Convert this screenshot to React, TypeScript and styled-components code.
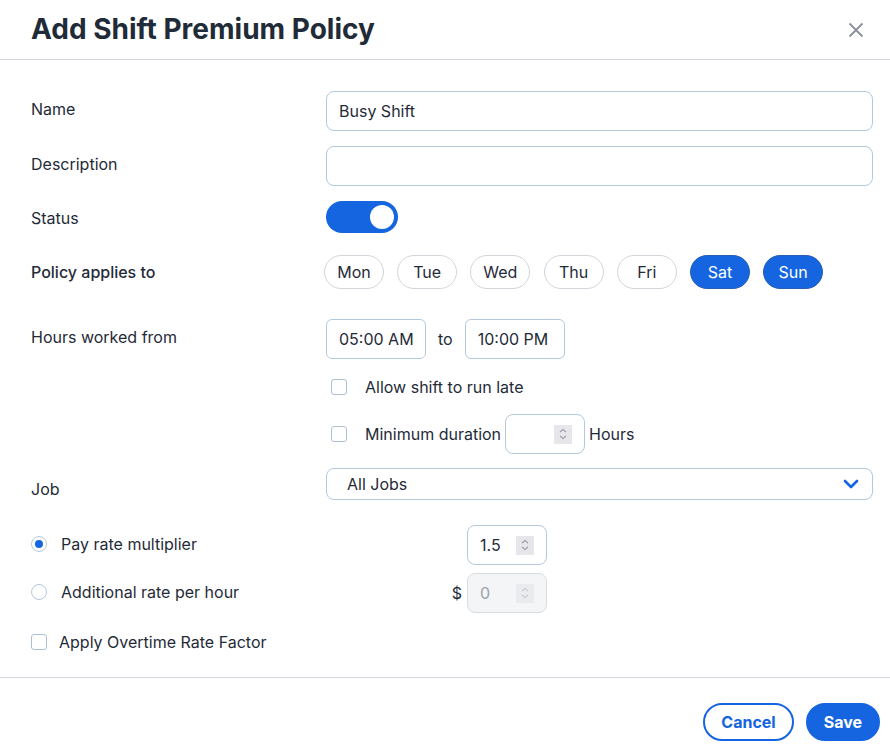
import React from "react";
import styled, { createGlobalStyle } from "styled-components";

const Global = createGlobalStyle`
  html, body { margin: 0; padding: 0; background: #fff; }
  body { font-family: Inter, "Noto Sans", sans-serif; color: #1f2b38; }
  * { box-sizing: border-box; }
`;

const BLUE = "#1565e0";
const FIELD_BORDER = "#b4c8dc";

const Dialog = styled.div`
  width: 890px;
  height: 745px;
  display: flex;
  flex-direction: column;
  background: #fff;
`;

const Header = styled.div`
  height: 60px;
  display: flex;
  align-items: center;
  justify-content: space-between;
  padding: 0 22px 0 31px;
  border-bottom: 1px solid #d3d8de;
`;

const Title = styled.h1`
  margin: 0;
  font-size: 28px;
  font-weight: 700;
  color: #1f2b38;
  letter-spacing: 0;
  line-height: 1;
  padding-bottom: 1px;
`;

const CloseButton = styled.button`
  border: none;
  background: none;
  padding: 0;
  width: 24px;
  height: 24px;
  display: flex;
  align-items: center;
  justify-content: center;
  cursor: pointer;
`;

const Body = styled.div`
  flex: 1;
  padding: 31px 17px 0 31px;
  display: flex;
  flex-direction: column;
`;

const Row = styled.div<{ $h: number; $mt?: number; $top?: boolean }>`
  display: grid;
  grid-template-columns: 295px 1fr;
  align-items: ${(p) => (p.$top ? "start" : "center")};
  min-height: ${(p) => p.$h}px;
  margin-top: ${(p) => p.$mt ?? 0}px;
`;

const Label = styled.div<{ $bold?: boolean; $pt?: number; $pb?: number }>`
  font-size: 16px;
  line-height: 20px;
  font-weight: ${(p) => (p.$bold ? 500 : 400)};
  color: #1f2b38;
  padding-top: ${(p) => p.$pt ?? 0}px;
  padding-bottom: ${(p) => p.$pb ?? 0}px;
`;

const TextInput = styled.input`
  width: 100%;
  height: 40px;
  border: 1px solid ${FIELD_BORDER};
  border-radius: 8px;
  padding: 0 12px;
  font-family: inherit;
  font-size: 16px;
  color: #1f2b38;
  outline: none;
`;

const Toggle = styled.div`
  width: 72px;
  height: 32px;
  border-radius: 16px;
  background: ${BLUE};
  position: relative;
`;

const Knob = styled.span`
  position: absolute;
  right: 4px;
  top: 4px;
  width: 24px;
  height: 24px;
  border-radius: 50%;
  background: #fff;
`;

const Days = styled.div`
  display: flex;
  gap: 13.2px;
  margin-left: -2px;
`;

const DayChip = styled.button<{ $on?: boolean }>`
  width: 60px;
  height: 34px;
  border-radius: 17px;
  border: 1px solid ${(p) => (p.$on ? "#2a5fb0" : "#d2d6db")};
  background: ${(p) => (p.$on ? BLUE : "#fff")};
  color: ${(p) => (p.$on ? "#fff" : "#1f2b38")};
  font-family: inherit;
  font-size: 16px;
  padding: 0;
  cursor: pointer;
`;

const Inline = styled.div<{ $gap?: number }>`
  display: flex;
  align-items: center;
  gap: ${(p) => p.$gap ?? 12}px;
`;

const TimeBox = styled.div`
  width: 100px;
  height: 40px;
  border: 1px solid ${FIELD_BORDER};
  border-radius: 6px;
  display: flex;
  align-items: center;
  padding-left: 12px;
  font-size: 16px;
`;

const Text = styled.span`
  font-size: 16px;
  line-height: 20px;
  color: #1f2b38;
`;

const CheckBox = styled.span<{ $ml?: number }>`
  width: 16px;
  height: 16px;
  border: 1.5px solid #adc0d3;
  border-radius: 3px;
  background: #fff;
  margin-left: ${(p) => p.$ml ?? 0}px;
  flex: none;
`;

const Radio = styled.span<{ $on?: boolean }>`
  width: 16px;
  height: 16px;
  border-radius: 50%;
  border: 1.5px solid #b6c8da;
  background: #fff;
  display: flex;
  align-items: center;
  justify-content: center;
  flex: none;
  &::after {
    content: "";
    width: 8px;
    height: 8px;
    border-radius: 50%;
    background: ${(p) => (p.$on ? BLUE : "transparent")};
  }
`;

const NumberBox = styled.div<{ $disabled?: boolean }>`
  width: 80px;
  height: 40px;
  border: 1px solid ${(p) => (p.$disabled ? "#d7dde3" : FIELD_BORDER)};
  background: ${(p) => (p.$disabled ? "#f4f5f6" : "#fff")};
  border-radius: 8px;
  display: flex;
  align-items: center;
  justify-content: space-between;
  padding: 0 12px 0 12px;
  font-size: 16px;
  color: ${(p) => (p.$disabled ? "#9aa3ad" : "#1f2b38")};
`;

const Spinner = styled.span<{ $disabled?: boolean }>`
  width: 18px;
  height: 19px;
  background: ${(p) => (p.$disabled ? "#eaebee" : "#e6e6eb")};
  display: flex;
  align-items: center;
  justify-content: center;
  margin-left: auto;
`;

const Select = styled.div`
  width: 100%;
  height: 32px;
  border: 1px solid ${FIELD_BORDER};
  border-radius: 8px;
  display: flex;
  align-items: center;
  justify-content: space-between;
  padding: 0 13px 0 20px;
  font-size: 16px;
`;

const RateRow = styled.div<{ $mt: number }>`
  display: flex;
  align-items: center;
  height: 40px;
  margin-top: ${(p) => p.$mt}px;
`;

const RateLabel = styled.div`
  width: 436px;
  display: flex;
  align-items: center;
  gap: 14px;
  padding-bottom: 2px;
`;

const Prefix = styled.span`
  width: 436px;
  margin-left: -436px;
  text-align: right;
  padding-right: 5px;
  font-size: 16px;
  pointer-events: none;
`;

const Footer = styled.div`
  height: 68px;
  border-top: 1px solid #d3d8de;
  display: flex;
  align-items: flex-start;
  justify-content: flex-end;
  gap: 12px;
  padding: 25px 10px 0 0;
`;

const Btn = styled.button<{ $primary?: boolean }>`
  height: 38px;
  padding: 0 ${(p) => (p.$primary ? 16 : 16)}px;
  border-radius: 19px;
  border: 2px solid ${BLUE};
  background: ${(p) => (p.$primary ? BLUE : "#fff")};
  color: ${(p) => (p.$primary ? "#fff" : BLUE)};
  font-family: inherit;
  font-size: 16px;
  font-weight: 700;
  cursor: pointer;
`;

const SpinIcon = ({ color = "#8f96a0" }: { color?: string }) => (
  <svg width="10" height="14" viewBox="0 0 10 14" fill="none">
    <path d="M2 5.2 L5 2.4 L8 5.2" stroke={color} strokeWidth="1.1" />
    <path d="M2 8.8 L5 11.6 L8 8.8" stroke={color} strokeWidth="1.1" />
  </svg>
);

const days = ["Mon", "Tue", "Wed", "Thu", "Fri", "Sat", "Sun"];

export default function App() {
  return (
    <>
      <Global />
      <Dialog>
        <Header>
          <Title>Add Shift Premium Policy</Title>
          <CloseButton aria-label="Close">
            <svg width="16" height="16" viewBox="0 0 16 16">
              <path d="M1.5 1.5 L14.5 14.5 M14.5 1.5 L1.5 14.5" stroke="#8a9099" strokeWidth="1.8" />
            </svg>
          </CloseButton>
        </Header>
        <Body>
          <Row $h={40}>
            <Label $pb={5}>Name</Label>
            <TextInput defaultValue="Busy Shift" />
          </Row>
          <Row $h={40} $mt={15}>
            <Label $pb={5}>Description</Label>
            <TextInput />
          </Row>
          <Row $h={32} $mt={15}>
            <Label $pt={2}>Status</Label>
            <Toggle>
              <Knob />
            </Toggle>
          </Row>
          <Row $h={34} $mt={22}>
            <Label $bold>Policy applies to</Label>
            <Days>
              {days.map((d) => (
                <DayChip key={d} $on={d === "Sat" || d === "Sun"}>
                  {d}
                </DayChip>
              ))}
            </Days>
          </Row>
          <Row $h={40} $mt={30}>
            <Label $pb={5}>Hours worked from</Label>
            <Inline $gap={12}>
              <TimeBox>05:00 AM</TimeBox>
              <Text>to</Text>
              <TimeBox>10:00 PM</TimeBox>
            </Inline>
          </Row>
          <Row $h={40} $mt={8}>
            <span />
            <Inline $gap={18}>
              <CheckBox $ml={5} />
              <Text>Allow shift to run late</Text>
            </Inline>
          </Row>
          <Row $h={40} $mt={7}>
            <span />
            <Inline $gap={18}>
              <CheckBox $ml={5} />
              <Inline $gap={4}>
                <Text>Minimum duration</Text>
                <NumberBox>
                  <Spinner>
                    <SpinIcon />
                  </Spinner>
                </NumberBox>
                <Text>Hours</Text>
              </Inline>
            </Inline>
          </Row>
          <Row $h={32} $mt={14} $top>
            <Label $pt={11}>Job</Label>
            <Select>
              <span>All Jobs</span>
              <svg width="16" height="10" viewBox="0 0 16 10">
                <path d="M2 2 L8 8 L14 2" stroke={BLUE} strokeWidth="2.6" fill="none" strokeLinecap="round" strokeLinejoin="round" />
              </svg>
            </Select>
          </Row>
          <RateRow $mt={25}>
            <RateLabel>
              <Radio $on />
              <Text>Pay rate multiplier</Text>
            </RateLabel>
            <NumberBox>
              <span>1.5</span>
              <Spinner>
                <SpinIcon />
              </Spinner>
            </NumberBox>
          </RateRow>
          <RateRow $mt={8}>
            <RateLabel>
              <Radio />
              <Text>Additional rate per hour</Text>
            </RateLabel>
            <Prefix>$</Prefix>
            <NumberBox $disabled>
              <span>0</span>
              <Spinner $disabled>
                <SpinIcon color="#c3c8ce" />
              </Spinner>
            </NumberBox>
          </RateRow>
          <RateRow $mt={9}>
            <Inline $gap={12}>
              <CheckBox />
              <Text>Apply Overtime Rate Factor</Text>
            </Inline>
          </RateRow>
        </Body>
        <Footer>
          <Btn>Cancel</Btn>
          <Btn $primary>Save</Btn>
        </Footer>
      </Dialog>
    </>
  );
}
